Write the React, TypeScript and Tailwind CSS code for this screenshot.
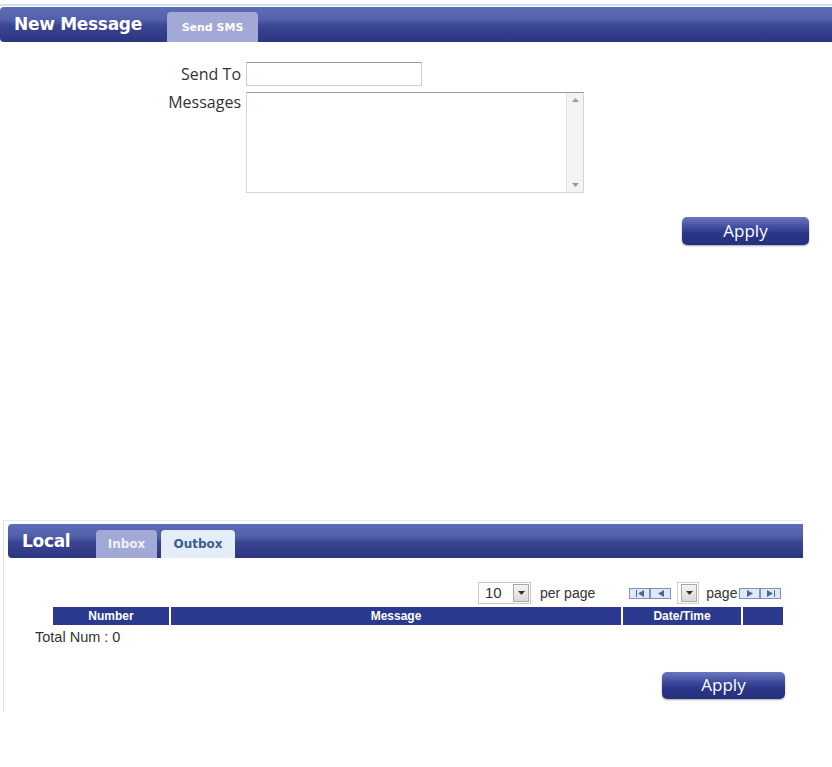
import React from "react";

const barBg =
  "bg-[linear-gradient(to_bottom,#5f6bb5_0%,#5360ab_35%,#3a4491_55%,#2c3581_100%)]";

const btnBg =
  "bg-[linear-gradient(to_bottom,#6a76bf_0%,#3d4a9c_40%,#2a3688_60%,#26307d_100%)]";

function NavBox({ dir, bar }: { dir: "l" | "r"; bar?: boolean }) {
  return (
    <span className="w-[21px] h-[11px] border border-[#7f93b8] bg-[#dfe8f4] flex items-center justify-center gap-[1px]">
      {bar && dir === "l" && <span className="w-[1px] h-[7px] bg-[#4d6696]" />}
      <svg width="6" height="7" viewBox="0 0 6 7">
        {dir === "l" ? (
          <polygon points="6,0 6,7 0,3.5" fill="#4d6696" />
        ) : (
          <polygon points="0,0 0,7 6,3.5" fill="#4d6696" />
        )}
      </svg>
      {bar && dir === "r" && <span className="w-[1px] h-[7px] bg-[#4d6696]" />}
    </span>
  );
}

function DropBtn() {
  return (
    <span className="w-[16px] h-[18px] border border-[#a9a9a9] bg-[linear-gradient(to_bottom,#f4f4f4,#d9d9d9)] flex items-center justify-center">
      <svg width="7" height="4" viewBox="0 0 7 4">
        <polygon points="0,0 7,0 3.5,4" fill="#333" />
      </svg>
    </span>
  );
}

export default function App() {
  return (
    <div className="w-[832px] h-[767px] bg-white relative overflow-hidden">
      {/* Top section */}
      <div className="mt-[4px] h-[2px] bg-[#cfe2ea] w-[832px]" />
      <div className={`mt-[1px] h-[35px] w-[832px] rounded-l-[4px] ${barBg} flex items-end`}>
        <div className="self-center ml-[14px] w-[153px] text-white font-bold text-[17px] font-['DejaVu_Sans',sans-serif] tracking-[-0.3px] leading-none">
          New Message
        </div>
        <div className="w-[91px] h-[30px] rounded-t-[4px] bg-[#a3a9d6] flex items-center justify-center text-white font-bold text-[11px] font-['DejaVu_Sans',sans-serif] leading-none">
          Send SMS
        </div>
      </div>

      <div className="mt-[20px] font-['Open_Sans',sans-serif] text-[16px] text-[#333]">
        <div className="flex items-center">
          <div className="w-[242px] text-right leading-none pr-[1px]">Send To</div>
          <div className="ml-[4px] w-[176px] h-[24px] border border-[#cfcfcf] border-t-[#9a9a9a] bg-white" />
        </div>
        <div className="flex mt-[6px]">
          <div className="w-[242px] text-right leading-none pt-[2px] pr-[1px]">Messages</div>
          <div className="ml-[4px] w-[338px] h-[101px] border border-[#d5d5d5] border-t-[#9a9a9a] bg-white flex justify-end">
            <div className="w-[17px] h-full bg-[#f3f3f3] border-l border-[#e4e4e4] flex flex-col justify-between items-center py-[5px]">
              <svg width="7" height="4" viewBox="0 0 7 4">
                <polygon points="0,4 7,4 3.5,0" fill="#9a9a9a" />
              </svg>
              <svg width="7" height="4" viewBox="0 0 7 4">
                <polygon points="0,0 7,0 3.5,4" fill="#9a9a9a" />
              </svg>
            </div>
          </div>
        </div>
        <div className="mt-[24px] ml-[682px]">
          <div className={`w-[127px] h-[28px] rounded-[5px] ${btnBg} shadow-[0_1px_2px_rgba(0,0,0,0.35)] flex items-center justify-center text-white text-[17px] font-['Open_Sans',sans-serif] leading-none pb-[1px]`}>
            Apply
          </div>
        </div>
      </div>

      {/* Bottom section */}
      <div className="absolute left-[3px] top-[520px] w-[800px] h-[191px] border-l border-t border-[#d5e3ea] border-t-[#d8ecf1]">
        <div className={`mt-[3px] ml-[4px] h-[34px] w-[795px] rounded-l-[4px] ${barBg} flex items-end`}>
          <div className="self-center ml-[14px] w-[74px] text-white font-bold text-[17px] font-['DejaVu_Sans',sans-serif] tracking-[-0.3px] leading-none">
            Local
          </div>
          <div className="w-[61px] h-[28px] rounded-t-[4px] bg-[#a3a9d6] flex items-center justify-center text-[#eef0fa] font-bold text-[12px] font-['DejaVu_Sans',sans-serif] leading-none">
            Inbox
          </div>
          <div className="ml-[4px] w-[74px] h-[28px] rounded-t-[4px] bg-[#e3eef8] flex items-center justify-center text-[#3d5c8f] font-bold text-[12px] font-['DejaVu_Sans',sans-serif] leading-none">
            Outbox
          </div>
        </div>

        <div className="font-['Liberation_Sans',Arial,sans-serif]">
          {/* pagination */}
          <div className="mt-[24px] h-[22px] flex items-center text-[14px] text-[#333]">
            <div className="ml-[474px] w-[53px] h-[22px] border border-[#c8c8c8] flex items-center justify-between pl-[6px] pr-[1px] text-[15px]">
              <span>10</span>
              <DropBtn />
            </div>
            <span className="ml-[9px]">per page</span>
            <div className="ml-[34px] flex">
              <NavBox dir="l" bar />
              <NavBox dir="l" />
            </div>
            <div className="ml-[6px] w-[22px] h-[22px] border border-[#d0d0d0] flex items-center justify-end pr-[1px]">
              <DropBtn />
            </div>
            <span className="ml-[7px] w-[33px]">page</span>
            <div className="flex">
              <NavBox dir="r" />
              <NavBox dir="r" bar />
            </div>
          </div>

          {/* table header */}
          <div className="mt-[3px] ml-[49px] flex gap-[2px] h-[18px] text-white font-bold text-[12px] leading-none">
            <div className="w-[116px] bg-[#2b398f] flex items-center justify-center">Number</div>
            <div className="w-[450px] bg-[#2b398f] flex items-center justify-center">Message</div>
            <div className="w-[118px] bg-[#2b398f] flex items-center justify-center">Date/Time</div>
            <div className="w-[40px] bg-[#2b398f]" />
          </div>

          <div className="mt-[5px] ml-[31px] text-[14.5px] text-[#333] leading-none">Total Num : 0</div>

          <div className="mt-[27px] ml-[658px]">
            <div className={`w-[123px] h-[27px] rounded-[5px] ${btnBg} shadow-[0_1px_2px_rgba(0,0,0,0.35)] flex items-center justify-center text-white text-[17px] font-['Open_Sans',sans-serif] leading-none pb-[1px]`}>
              Apply
            </div>
          </div>
        </div>
      </div>
    </div>
  );
}
